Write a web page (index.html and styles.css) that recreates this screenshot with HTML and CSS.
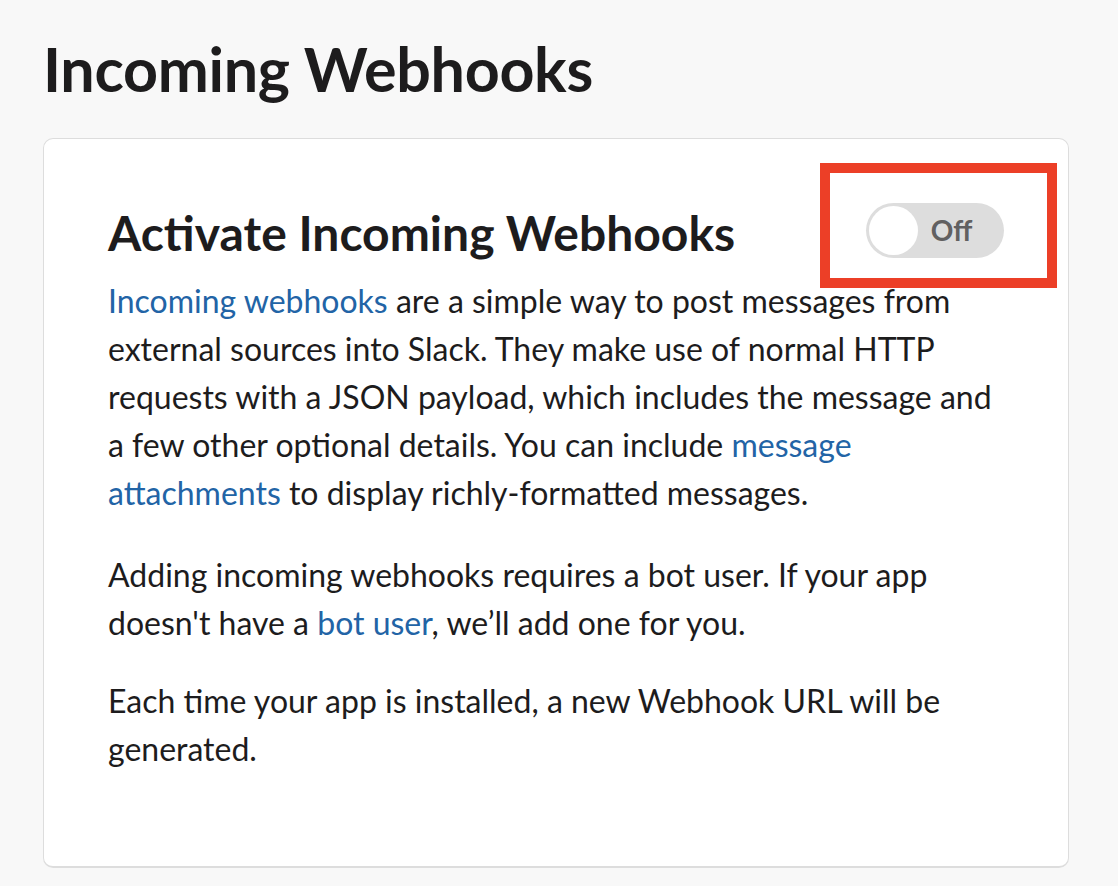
FILE: index.html
```html
<!DOCTYPE html>
<html lang="en">
<head>
<meta charset="utf-8">
<title>Incoming Webhooks</title>
<link rel="stylesheet" href="styles.css">
</head>
<body>
<main class="page">
  <h1 class="page-title">Incoming Webhooks</h1>
  <section class="card">
    <div class="card-head">
      <h2 class="card-title">Activate Incoming Webhooks</h2>
      <div class="toggle-wrap">
        <div class="toggle">
          <span class="knob"></span>
          <span class="toggle-label">Off</span>
        </div>
        <span class="highlight"></span>
      </div>
    </div>
    <p class="text text-first"><a href="#" class="link">Incoming webhooks</a> are a simple way to post messages from external sources into Slack. They make use of normal HTTP requests with a JSON payload, which includes the message and a few other optional details. You can include <a href="#" class="link">message attachments</a> to display richly-formatted messages.</p>
    <p class="text">Adding incoming webhooks requires a bot user. If your app doesn't have a <a href="#" class="link">bot user</a>, we’ll add one for you.</p>
    <p class="text">Each time your app is installed, a new Webhook URL will be generated.</p>
  </section>
</main>
</body>
</html>
```

FILE: styles.css
```css
* { box-sizing: border-box; }

html, body {
  margin: 0;
  padding: 0;
  background: #f8f8f8;
}

body {
  font-family: Lato, "Noto Sans", sans-serif;
  color: #1d1c1d;
}

.page {
  padding: 32px 49px 0 43px;
}

.page-title {
  margin: 0 0 33px 0;
  font-size: 61px;
  line-height: 73px;
  font-weight: 700;
  letter-spacing: -0.3px;
  color: #1d1c1d;
}

.card {
  background: #ffffff;
  border: 1px solid #dddddd;
  border-bottom-width: 2px;
  border-radius: 10px;
  padding: 63px 64px 66px 64px;
  height: 730px;
}

.card-head {
  display: flex;
  justify-content: space-between;
  align-items: center;
  margin-bottom: 13px;
}

.card-title {
  margin: 0;
  font-size: 48px;
  line-height: 62px;
  font-weight: 700;
  color: #1d1c1d;
}

.toggle-wrap {
  position: relative;
  margin-top: -6px;
}

.toggle {
  display: flex;
  align-items: center;
  width: 138px;
  height: 55px;
  padding: 3px;
  border-radius: 28px;
  background: #dddddd;
}

.knob {
  width: 49px;
  height: 49px;
  border-radius: 50%;
  background: #ffffff;
  flex: none;
}

.toggle-label {
  flex: 1;
  text-align: center;
  font-size: 28px;
  font-weight: 700;
  color: #616061;
  padding-right: 16px;
}

.highlight {
  position: absolute;
  left: -46px;
  top: -40px;
  width: 237px;
  height: 125px;
  border: 10px solid #ec3f27;
  pointer-events: none;
}

.text {
  margin: 0 0 30px 0;
  font-size: 32px;
  line-height: 48px;
  color: #1d1c1d;
  max-width: 896px;
}

.text-first {
  margin-bottom: 34px;
}

.link {
  color: #2264a6;
  text-decoration: none;
}
```
